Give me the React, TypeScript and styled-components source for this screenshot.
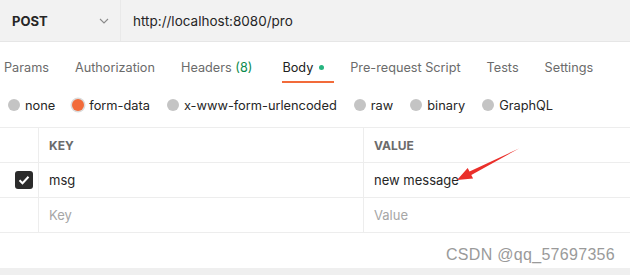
import styled, { createGlobalStyle } from "styled-components";

const GlobalStyle = createGlobalStyle`
  html, body {
    margin: 0;
    padding: 0;
    background: #ffffff;
  }
  body {
    font-family: Inter, "Liberation Sans", sans-serif;
    color: #212121;
    width: 630px;
    height: 275px;
    overflow: hidden;
  }
`;

const Page = styled.div`
  position: relative;
  width: 630px;
  height: 275px;
  display: flex;
  flex-direction: column;
`;

const RequestBar = styled.div`
  display: flex;
  height: 41px;
  background: #f2f2f2;
  border-bottom: 1px solid #e6e6e6;
`;

const MethodSelect = styled.div`
  width: 121px;
  display: flex;
  align-items: center;
  justify-content: space-between;
  padding: 0 11px 0 12px;
  box-sizing: border-box;
  border-right: 1px solid #e9e9e9;
  font-size: 13px;
  font-weight: 700;
  color: #262626;
`;

const UrlField = styled.div`
  flex: 1;
  display: flex;
  align-items: center;
  padding-left: 12px;
  font-size: 13.5px;
  color: #262626;
`;

const TabRow = styled.div`
  display: flex;
  gap: 26px;
  padding: 0 0 0 4px;
  margin-top: 9px;
  height: 32px;
`;

const Tab = styled.div<{ active?: boolean; spaced?: boolean }>`
  display: flex;
  align-items: center;
  gap: 5px;
  font-size: 12.7px;
  margin-right: ${(p) => (p.spaced ? "4px" : "0")};
  color: ${(p) => (p.active ? "#212121" : "#6b6b6b")};
  position: relative;
  ${(p) =>
    p.active &&
    `&:after {
      content: "";
      position: absolute;
      left: 0;
      right: -10px;
      bottom: 0;
      height: 2px;
      background: #f26b3a;
    }`}
`;

const Count = styled.span`
  color: #0b8a4d;
`;

const Dot = styled.span`
  width: 5px;
  height: 5px;
  border-radius: 50%;
  background: #26b47f;
  margin-left: 1px;
`;

const RadioRow = styled.div`
  display: flex;
  align-items: center;
  gap: 17px;
  padding-left: 8px;
  margin-top: 7px;
  height: 30px;
`;

const RadioOption = styled.div`
  display: flex;
  align-items: center;
  gap: 5px;
  font-size: 12.8px;
  color: #262626;
`;

const RadioDot = styled.span<{ checked?: boolean }>`
  width: 12px;
  height: 12px;
  border-radius: 50%;
  background: ${(p) => (p.checked ? "#f26b3a" : "#c4c4c4")};
  box-shadow: ${(p) => (p.checked ? "0 0 0 1.5px #dcdcdc" : "none")};
`;

const Table = styled.div`
  margin-top: 7px;
  border-top: 1px solid #ededed;
  display: flex;
  flex-direction: column;
`;

const Row = styled.div`
  display: grid;
  grid-template-columns: 38px 325px 1fr;
  height: 34px;
  border-bottom: 1px solid #ededed;
`;

const Cell = styled.div<{ head?: boolean; placeholder?: boolean }>`
  display: flex;
  align-items: center;
  padding-left: 10px;
  border-left: 1px solid #ededed;
  font-size: ${(p) => (p.head ? "12px" : "13px")};
  font-weight: ${(p) => (p.head ? 700 : 400)};
  color: ${(p) => (p.head ? "#6b6b6b" : p.placeholder ? "#a6a6a6" : "#262626")};
`;

const CheckCell = styled.div`
  display: flex;
  align-items: center;
  justify-content: flex-end;
  padding-right: 5px;
`;

const CheckBox = styled.span`
  width: 18px;
  height: 18px;
  border-radius: 3px;
  background: #2b2b2b;
  display: flex;
  align-items: center;
  justify-content: center;
`;

const Footer = styled.div`
  flex: 1;
  border-bottom: 7px solid #efefef;
`;

const Watermark = styled.div`
  position: absolute;
  right: 15px;
  top: 246px;
  font-family: "Liberation Sans", Arial, sans-serif;
  font-size: 16px;
  color: #9a9a9a;
  letter-spacing: 0.3px;
`;

const Arrow = styled.svg`
  position: absolute;
  left: 0;
  top: 0;
  pointer-events: none;
`;

const tabs = ["Params", "Authorization", "Headers", "Body", "Pre-request Script", "Tests", "Settings"];
const options = ["none", "form-data", "x-www-form-urlencoded", "raw", "binary", "GraphQL"];

export default function App() {
  return (
    <Page>
      <GlobalStyle />
      <RequestBar>
        <MethodSelect>
          POST
          <svg width="10" height="6" viewBox="0 0 10 6">
            <path d="M1 1l4 4 4-4" fill="none" stroke="#8a8a8a" strokeWidth="1.1" />
          </svg>
        </MethodSelect>
        <UrlField>http://localhost:8080/pro</UrlField>
      </RequestBar>
      <TabRow>
        {tabs.map((t) => (
          <Tab key={t} active={t === "Body"} spaced={t === "Headers"}>
            {t === "Headers" ? (
              <span>
                Headers <Count>(8)</Count>
              </span>
            ) : (
              t
            )}
            {t === "Body" && <Dot />}
          </Tab>
        ))}
      </TabRow>
      <RadioRow>
        {options.map((o) => (
          <RadioOption key={o}>
            <RadioDot checked={o === "form-data"} />
            {o}
          </RadioOption>
        ))}
      </RadioRow>
      <Table>
        <Row>
          <CheckCell />
          <Cell head>KEY</Cell>
          <Cell head>VALUE</Cell>
        </Row>
        <Row>
          <CheckCell>
            <CheckBox>
              <svg width="12" height="10" viewBox="0 0 12 10">
                <path d="M1.5 5.2l3 3 6-6.5" fill="none" stroke="#fff" strokeWidth="2" />
              </svg>
            </CheckBox>
          </CheckCell>
          <Cell>msg</Cell>
          <Cell>new message</Cell>
        </Row>
        <Row>
          <CheckCell />
          <Cell placeholder>Key</Cell>
          <Cell placeholder>Value</Cell>
        </Row>
      </Table>
      <Footer />
      <Watermark>CSDN @qq_57697356</Watermark>
      <Arrow width="630" height="275" viewBox="0 0 630 275">
        <polygon
          points="457,180 467.7,167.9 469.5,171.4 519,148.5 471.3,175 473.1,178.5"
          fill="#ea2f2a"
        />
      </Arrow>
    </Page>
  );
}
